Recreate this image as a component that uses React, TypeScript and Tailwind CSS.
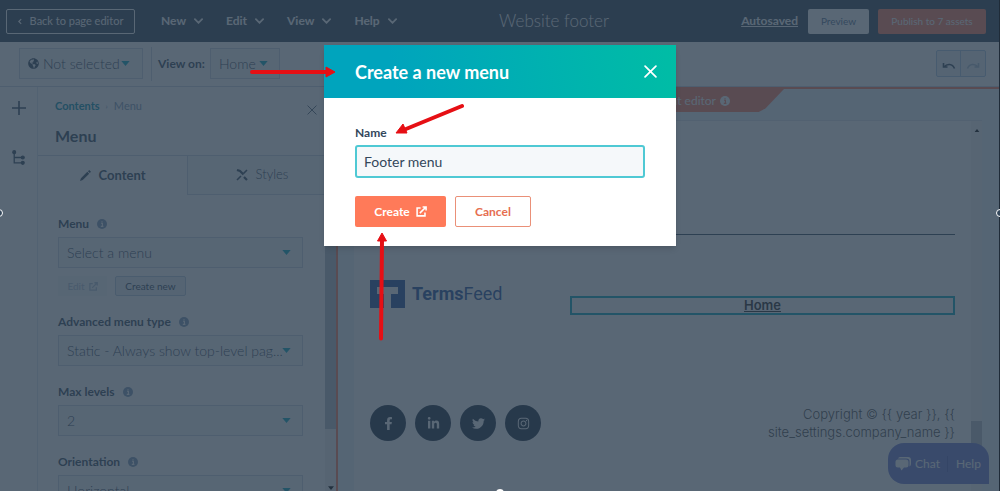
import React from "react";
import { FaFacebookF, FaLinkedinIn, FaTwitter, FaInstagram, FaGlobeAmericas } from "react-icons/fa";

function Caret({ className = "" }: { className?: string }) {
  return (
    <svg viewBox="0 0 10 6" className={`h-[5px] w-[9px] fill-[#00a4bd] ${className}`} aria-hidden="true">
      <path d="M0 0h10L5 6z" />
    </svg>
  );
}

function Chevron() {
  return (
    <svg viewBox="0 0 10 6" className="h-[6px] w-[9px] fill-none stroke-current stroke-2" aria-hidden="true">
      <path d="M1 1l4 4 4-4" strokeLinecap="round" />
    </svg>
  );
}

function Info({ className = "text-[#7c98b6]", mark = "#fff" }: { className?: string; mark?: string }) {
  return (
    <svg viewBox="0 0 10 10" className={`size-[10px] ${className}`} aria-hidden="true">
      <circle cx="5" cy="5" r="5" fill="currentColor" />
      <path d="M4 4.2h1.4v3M3.8 7.4h2.6M5 2.2v1" stroke={mark} strokeWidth="1.1" fill="none" />
    </svg>
  );
}

function External({ className }: { className: string }) {
  return (
    <svg viewBox="0 0 12 12" className={`fill-none stroke-current ${className}`} strokeWidth="1.7" aria-hidden="true">
      <path d="M5 2.2H1.2v8.6h8.6V7M4.2 7.8L10.6 1.4M7.2 1h3.8v3.8" />
    </svg>
  );
}

function Cross({ className }: { className: string }) {
  return (
    <svg viewBox="0 0 12 12" className={`fill-none stroke-current ${className}`} aria-hidden="true">
      <path d="M1 1l10 10M11 1L1 11" strokeLinecap="round" />
    </svg>
  );
}

function Field({ id, label, value, children }: { id: string; label: string; value: string; children?: React.ReactNode }) {
  return (
    <div>
      <div className="flex h-4 items-center gap-2">
        <label htmlFor={id} className="text-xs font-bold">{label}</label>
        <Info />
      </div>
      <div className="mt-[5px] grid items-center">
        <select id={id} className="col-start-1 row-start-1 h-[31px] w-full appearance-none border border-[#cbd6e2] bg-[#f5f8fa] pr-4 pl-2 text-sm font-light">
          <option>{value}</option>
        </select>
        <Caret className="col-start-1 row-start-1 mr-3 justify-self-end" />
      </div>
      {children}
    </div>
  );
}

function TopBar() {
  return (
    <header className="flex h-[42px] shrink-0 items-center bg-[#2d3e50] text-white">
      <div className="flex flex-1 items-center">
        <button className="ml-[6px] flex h-[25px] w-[129px] items-center justify-center gap-2 rounded-xs border border-white text-[11px]">
          <svg viewBox="0 0 5 8" className="h-[7px] w-[4px] fill-none stroke-current stroke-[1.5]" aria-hidden="true">
            <path d="M4 1L1 4l3 3" />
          </svg>
          Back to page editor
        </button>
        <nav className="ml-[26px] flex gap-[23px] text-xs font-bold">
          {["New", "Edit", "View", "Help"].map((name) => (
            <button key={name} className="flex items-center gap-2">
              {name}
              <Chevron />
            </button>
          ))}
        </nav>
      </div>
      <h1 className="text-[17px] font-light">Website footer</h1>
      <div className="flex w-[391px] items-center justify-end">
        <a href="#saved" className="text-xs font-bold underline">Autosaved</a>
        <button className="ml-[10px] h-[25px] w-[61px] rounded-xs bg-white text-[10px] text-[#506e91]">Preview</button>
        <button className="ml-[9px] mr-[14px] h-[25px] w-[108px] rounded-xs bg-[#ff7a59] text-[10px]">Publish to 7 assets</button>
      </div>
    </header>
  );
}

function Toolbar() {
  return (
    <div className="flex h-[45px] shrink-0 items-center border-b border-[#cbd6e2] bg-white pb-px">
      <div className="ml-[19px] grid w-[124px] items-center">
        <select aria-label="Language" className="col-start-1 row-start-1 h-[31px] appearance-none border border-[#cbd6e2] bg-[#f5f8fa] pl-[23px] text-sm font-light">
          <option>Not selected</option>
        </select>
        <FaGlobeAmericas className="col-start-1 row-start-1 ml-[9px] size-[11px]" />
        <Caret className="col-start-1 row-start-1 mr-[13px] justify-self-end" />
      </div>
      <div className="ml-2 h-[34px] w-px bg-[#cbd6e2]" />
      <label htmlFor="view-on" className="ml-[6px] w-[52px] text-xs font-bold">View on:</label>
      <div className="grid w-[70px] items-center">
        <select id="view-on" className="col-start-1 row-start-1 h-[31px] appearance-none border border-[#cbd6e2] bg-[#f5f8fa] pl-2 text-sm font-light">
          <option>Home</option>
        </select>
        <Caret className="col-start-1 row-start-1 mr-3 justify-self-end" />
      </div>
      <div className="ml-auto mr-[14px] flex h-[27px] rounded-xs border border-[#a9c5e2] bg-[#eaf0f6]">
        <button aria-label="Undo" className="grid w-[24px] place-items-center border-r border-[#a9c5e2] pt-1">
          <svg viewBox="0 0 14 8" className="h-[8px] w-[14px] fill-none stroke-current stroke-[1.6]"><path d="M1.5 1v4h4M2 5c3-3.600 8.500-3.600 10.500 1.500" /></svg>
        </button>
        <button aria-label="Redo" disabled className="grid w-[24px] place-items-center pt-1 text-[#a9bccf]">
          <svg viewBox="0 0 14 8" className="h-[8px] w-[14px] fill-none stroke-current stroke-[1.6]"><path d="M12.500 1v4h-4M12 5C9 1.400 3.500 1.400 1.500 6.500" /></svg>
        </button>
      </div>
    </div>
  );
}

function Sidebar() {
  return (
    <aside className="flex w-[336px] shrink-0 bg-white">
      <div className="flex w-[38px] flex-col items-center border-r border-[#dfe6ee] pt-[14px]">
        <button aria-label="Add">
          <svg viewBox="0 0 14 14" className="size-[14px] stroke-current stroke-[1.6]"><path d="M7 0v14M0 7h14" /></svg>
        </button>
        <button aria-label="Content tree" className="mt-[35px]">
          <svg viewBox="0 0 12 14" className="h-[15px] w-[13px] fill-current stroke-current">
            <path d="M2 2v10h8M2 7h8" fill="none" strokeWidth="1.2" />
            <circle cx="2" cy="2" r="1.400" /><circle cx="10" cy="7" r="1.400" /><circle cx="10" cy="12" r="1.400" />
          </svg>
        </button>
      </div>
      <div className="flex min-w-0 flex-1 flex-col">
        <div className="flex h-[69px] shrink-0 justify-between border-b border-[#cbd6e2] pl-[17px] pr-[19px] pt-3">
          <div>
            <p className="flex items-center gap-[6px] text-[11px] leading-[14px] text-[#7c98b6]">
              <a href="#contents" className="font-bold text-[#0091ae]">Contents</a>
              <span className="text-[8px]">›</span>
              <span>Menu</span>
            </p>
            <h2 className="mt-[13px] text-base leading-5 font-bold">Menu</h2>
          </div>
          <button aria-label="Close panel" className="mt-[6px] self-start"><Cross className="size-[10px]" /></button>
        </div>
        <div role="tablist" className="flex h-[39px] shrink-0 text-[13px]">
          <button role="tab" aria-selected="true" className="flex w-[149px] items-center justify-center gap-2 font-bold">
            <svg viewBox="0 0 12 12" className="size-[11px] fill-current"><path d="M0 12l1-3L8 2l2 2-7 7zM8.700 1.300L10 0l2 2-1.300 1.300z" /></svg>
            Content
          </button>
          <button role="tab" aria-selected="false" className="flex flex-1 items-center justify-center gap-2 border-b border-l border-[#cbd6e2] bg-[#f5f8fa] font-light">
            <svg viewBox="0 0 12 12" className="size-[12px] fill-none stroke-current"><path d="M1 1l3 1 3.500 3.500M8 8l3 3" strokeWidth="2.200" /><path d="M11 1L7.500 4.500M5 7l-4 4" strokeWidth="1.600" /></svg>
            Styles
          </button>
        </div>
        <div className="flex flex-col gap-[18px] pl-[20px] pr-[33px] pt-[21px]">
          <Field id="menu" label="Menu" value="Select a menu">
            <div className="mt-2 flex gap-2 text-[10px]">
              <button disabled className="flex h-5 w-[49px] items-center justify-center gap-1 bg-[#f5f8fa] text-[#b0c1d4]">Edit <External className="size-[9px]" /></button>
              <button className="h-5 w-[71px] rounded-xs border border-[#b8c9db] bg-[#eaf0f6]">Create new</button>
            </div>
          </Field>
          <Field id="type" label="Advanced menu type" value="Static - Always show top-level pag..." />
          <Field id="levels" label="Max levels" value="2" />
          <Field id="orientation" label="Orientation" value="Horizontal" />
        </div>
      </div>
      <div className="-ml-[11px] flex w-[11px] flex-col items-center justify-between bg-[#f1f1f1]">
        <div className="h-[342px] w-full bg-[#b5bcc6]" />
        <svg viewBox="0 0 8 5" className="mb-px h-[4px] w-[6px]" aria-hidden="true"><path d="M0 0h8L4 5z" /></svg>
      </div>
    </aside>
  );
}

function Preview() {
  const social = [
    { name: "Facebook", Icon: FaFacebookF },
    { name: "LinkedIn", Icon: FaLinkedinIn },
    { name: "Twitter", Icon: FaTwitter },
    { name: "Instagram", Icon: FaInstagram },
  ];
  return (
    <main className="flex min-w-0 flex-1 flex-col border-t-2 border-l-2 border-[#ff7a59] bg-[#eaf3fa]">
      <div className="flex justify-center">
        <div className="flex h-[23px] w-[230px] items-center justify-center gap-1 bg-[#ff7a59] pr-1 text-xs text-white [clip-path:polygon(0_0,100%_0,92%_84%,89%_100%,11%_100%,8%_84%)]">
          Global content editor
          <Info className="text-white" mark="#ff7a59" />
        </div>
      </div>
      <div className="ml-4 mr-[18px] mt-2 flex flex-1 border-t border-[#dbe3eb] bg-white">
        <div className="flex-1 px-4 pt-[113px]">
          <hr className="border-[#33475b]" />
          <div className="mt-[45px] flex">
            <div className="flex h-7 w-[200px] shrink-0 items-center gap-[7px] text-[#1c4f9c]">
              <svg viewBox="0 0 35 28" className="h-7 w-[35px]" aria-hidden="true">
                <path fill="currentColor" d="M0 0h35v28H21V14h7V7H7v7h7v14H0z" />
              </svg>
              <span className="font-['Roboto',sans-serif] text-lg"><b className="font-bold">Terms</b>Feed</span>
            </div>
            <div className="mt-4 flex h-[19px] flex-1 items-center justify-center border-2 border-[#00a4bd] font-['Inter',sans-serif] text-[13px] font-semibold text-[#222]">
              <a href="#home" className="underline">Home</a>
            </div>
          </div>
          <div className="mt-[90px] flex justify-between">
            <div className="flex gap-[9px]">
              {social.map(({ name, Icon }) => (
                <a key={name} href={`#${name}`} aria-label={name} className="grid size-9 place-items-center rounded-full bg-[#16263b] text-white">
                  <Icon className="size-[13px]" />
                </a>
              ))}
            </div>
            <p className="w-[210px] text-right font-['Inter',sans-serif] text-[13px] leading-[18px] font-light text-[#444]">
              {"Copyright © {{ year }}, {{ site_settings.company_name }}"}
            </p>
          </div>
        </div>
        <div className="flex w-[11px] flex-col items-center bg-[#f6f6f6] pt-1">
          <svg viewBox="0 0 8 5" className="mt-1 h-[3px] w-[6px]" aria-hidden="true"><path d="M0 5h8L4 0z" /></svg>
          <div className="mt-[289px] h-[48px] w-full bg-[#b9bec5]" />
        </div>
      </div>
    </main>
  );
}

function Dialog() {
  return (
    <div role="dialog" aria-labelledby="dialog-title" className="relative w-[352px] bg-white shadow-md">
      <div className="flex h-[53px] items-center justify-between bg-linear-[80deg,#00a4bd_20%,#00bda5] pl-[31px] pr-[19px] text-white">
        <h2 id="dialog-title" className="text-lg font-bold">Create a new menu</h2>
        <button aria-label="Close"><Cross className="size-[13px] stroke-[1.6]" /></button>
      </div>
      <form className="px-[31px] pt-[27px] pb-[19px]">
        <label htmlFor="name" className="block text-xs leading-4 font-bold">Name</label>
        <input id="name" defaultValue="Footer menu" className="mt-1 block h-[33px] w-full rounded-[3px] border-2 border-[#4fc9d4] bg-[#f5f8fa] px-[7px] text-sm outline-none" />
        <div className="mt-[18px] flex gap-[9px] text-xs font-bold">
          <button type="button" className="flex h-[31px] w-[91px] items-center justify-center gap-[6px] rounded-xs bg-[#ff7a59] text-white">
            Create <External className="size-[11px]" />
          </button>
          <button type="button" className="h-[31px] w-[76px] rounded-xs border border-[#ea9078] text-[#e66e50]">Cancel</button>
        </div>
      </form>
      <svg viewBox="-75 0 427 296" className="pointer-events-none absolute top-0 -left-[75px] h-[296px] w-[427px] fill-[#e60f14] stroke-[#e60f14]" aria-hidden="true">
        <path d="M-72 27H3M138 61L82 84M57 293.500L58 195" strokeWidth="4" strokeLinecap="round" />
        <path d="M2 22l9 5-9 5zM72 88l7-9 4 9zM58 188l-4.500 8h9z" strokeWidth="1" />
      </svg>
    </div>
  );
}

export default function App() {
  return (
    <div className="relative flex h-screen flex-col overflow-hidden font-['Lato',sans-serif] text-[#33475b]">
      <TopBar />
      <Toolbar />
      <div className="flex min-h-0 flex-1">
        <Sidebar />
        <Preview />
      </div>
      <div className="absolute right-[11px] bottom-[7px] flex h-[41px] w-[101px] items-center rounded-t-[16px] rounded-bl-[16px] bg-[#6a78d1] text-xs text-white">
        <button className="flex w-[59px] items-center justify-center gap-1">
          <svg viewBox="0 0 16 14" className="h-[14px] w-4 fill-current" aria-hidden="true">
            <path d="M5 0h8a3 3 0 013 3v4a3 3 0 01-1.500 2.500V4.500A3 3 0 0011.500 1.500H3A3 3 0 015 0z" />
            <path d="M3 2.500h8a2.500 2.500 0 012.500 2.500v3a2.500 2.500 0 01-2.500 2.500H9L6.500 13.500 5 10.500H3A2.500 2.500 0 01.5 8V5A2.500 2.500 0 013 2.500z" />
          </svg>
          Chat
        </button>
        <button className="flex-1 border-l border-[#5361b8]">Help</button>
      </div>
      <div className="absolute inset-0 flex items-start justify-center bg-[#2d3e50]/79 pt-[45px] shadow-[inset_-1px_0_#1f2b38]">
        <Dialog />
      </div>
      <i className="absolute top-[209px] -left-[5px] size-2 rounded-full border border-white bg-[#33475b]" />
      <i className="absolute top-[209px] -right-[4px] size-2 rounded-full border border-white bg-[#33475b]" />
      <i className="absolute -bottom-[6px] left-1/2 size-2 -translate-x-1/2 rounded-full bg-white" />
    </div>
  );
}
